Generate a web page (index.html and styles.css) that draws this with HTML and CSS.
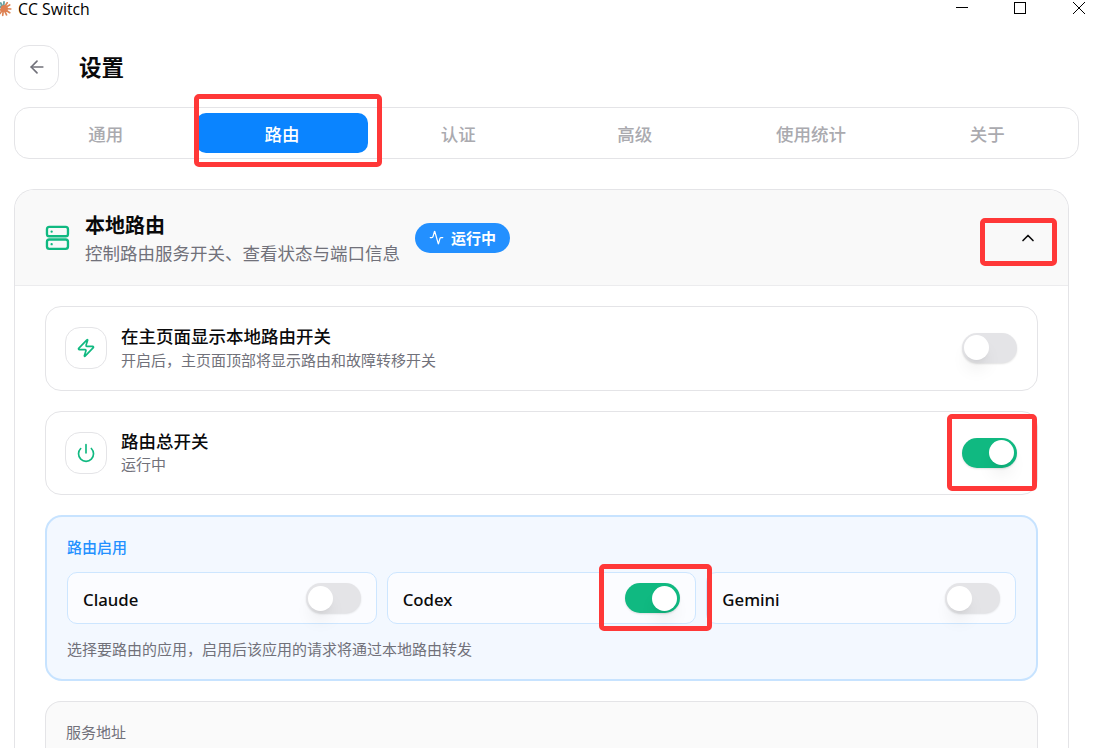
FILE: index.html
```html
<!DOCTYPE html>
<html lang="zh-CN">
<head>
    <meta charset="UTF-8">
    <title>CC Switch</title>
    <link rel="stylesheet" href="styles.css">
</head>
<body>
    <div class="titlebar">
        <svg class="logo" width="12" height="18" viewBox="0 0 12 18" fill="none" stroke-linecap="round">
            <path d="M3.5 8.5 10.8 9M3.5 8.5l6.2-3.6M3.5 8.5l6.2 4.2M3.5 8.5 7.2 2.8M3.5 8.5l3 6.3M3.5 8.5l-.8 6.8M3.5 8.5 0 13.5M3.5 8.5 0 10" stroke="#dc8455" stroke-width="1.7"/>
            <path d="M3.5 7.5 4 2M2.5 7 .7 3M1.5 8 0 6.5" stroke="#6ba3a5" stroke-width="1.9"/>
            <circle cx="4.3" cy="8.7" r="3.6" fill="#df8052"/>
        </svg>
        <span class="app-name">CC Switch</span>
        <svg class="window-buttons" width="130" height="18" viewBox="0 0 130 18" fill="none" stroke="#000" stroke-width="1">
            <path d="M0 7.5h12"/>
            <rect x="58.5" y="2.5" width="11" height="11"/>
            <path d="M117 2l12 12M129 2l-12 12"/>
        </svg>
    </div>

    <div class="page-header">
        <button class="back-button">
            <svg width="20" height="20" viewBox="0 0 24 24" class="icon"><path d="m12 19-7-7 7-7"/><path d="M19 12H5"/></svg>
        </button>
        <h1>设置</h1>
    </div>

    <div class="tabs">
        <div class="tab">通用</div>
        <div class="tab active">路由</div>
        <div class="tab">认证</div>
        <div class="tab">高级</div>
        <div class="tab">使用统计</div>
        <div class="tab">关于</div>
    </div>

    <div class="panel">
        <div class="panel-header">
            <svg width="28" height="28" viewBox="0 0 24 24" class="icon green"><rect width="18" height="8" x="3.4" y="2.5" rx="2"/><rect width="18" height="8" x="3.4" y="13.3" rx="2"/><path d="M7.4 6.5h.01M7.4 17.3h.01"/></svg>
            <div class="panel-title">
                <h2>本地路由</h2>
                <p>控制路由服务开关、查看状态与端口信息</p>
            </div>
            <div class="badge">
                <svg width="15" height="15" viewBox="0 0 24 24" class="icon"><path d="M22 12h-2.48a2 2 0 0 0-1.93 1.46l-2.35 8.36a.25.25 0 0 1-.48 0L9.24 2.18a.25.25 0 0 0-.48 0l-2.35 8.36A2 2 0 0 1 4.49 12H2"/></svg>
                运行中
            </div>
            <svg width="20" height="20" viewBox="0 0 24 24" class="icon chevron"><path d="m18 15-6-6-6 6"/></svg>
        </div>

        <div class="panel-body">
            <div class="row row-home">
                <div class="icon-box">
                    <svg width="20" height="20" viewBox="0 0 24 24" class="icon green"><path d="M4 14a1 1 0 0 1-.78-1.63l9.9-10.2a.5.5 0 0 1 .86.46l-1.92 6.02A1 1 0 0 0 13 10h7a1 1 0 0 1 .78 1.63l-9.9 10.2a.5.5 0 0 1-.86-.46l1.92-6.02A1 1 0 0 0 11 14z"/></svg>
                </div>
                <div class="row-text">
                    <h3>在主页面显示本地路由开关</h3>
                    <p>开启后，主页面顶部将显示路由和故障转移开关</p>
                </div>
                <div class="switch"></div>
            </div>

            <div class="row row-main">
                <div class="icon-box">
                    <svg width="20" height="20" viewBox="0 0 24 24" class="icon green"><path d="M12 2v10"/><path d="M18.4 6.6a9 9 0 1 1-12.77.04"/></svg>
                </div>
                <div class="row-text">
                    <h3>路由总开关</h3>
                    <p>运行中</p>
                </div>
                <div class="switch on"></div>
            </div>

            <div class="routing">
                <h4>路由启用</h4>
                <div class="apps">
                    <div class="app"><span>Claude</span><div class="switch"></div></div>
                    <div class="app"><span>Codex</span><div class="switch on"></div></div>
                    <div class="app"><span>Gemini</span><div class="switch"></div></div>
                </div>
                <p>选择要路由的应用，启用后该应用的请求将通过本地路由转发</p>
            </div>

            <div class="address">服务地址</div>
        </div>
    </div>

    <!-- red highlight frames -->
    <div class="mark mark-tab"></div>
    <div class="mark mark-chevron"></div>
    <div class="mark mark-main"></div>
    <div class="mark mark-codex"></div>
</body>
</html>
```

FILE: styles.css
```css
* {
    box-sizing: border-box;
}

body {
    margin: 0;
    height: 748px;
    overflow: hidden;
    position: relative;
    background: #fff;
    color: #0a0a0b;
    font-family: "Noto Sans", "Noto Sans CJK SC", sans-serif;
}

h1, h2, h3, h4, p {
    margin: 0;
}

.icon {
    display: block;
    flex: none;
    fill: none;
    stroke: currentColor;
    stroke-width: 2;
    stroke-linecap: round;
    stroke-linejoin: round;
}

.green {
    color: #10b981;
}

/* Window title bar */
.titlebar {
    display: flex;
    height: 18px;
    padding-right: 15px;
}

.app-name {
    margin-left: 6px;
    font-family: "Open Sans", sans-serif;
    font-size: 15.8px;
    line-height: 18px;
    color: #000;
}

.window-buttons {
    margin-left: auto;
}

/* Back button and page title */
.page-header {
    display: flex;
    align-items: center;
    gap: 20px;
    margin: 27px 0 0 14px;
    height: 45px;
}

.back-button {
    display: flex;
    align-items: center;
    justify-content: center;
    width: 45px;
    height: 45px;
    padding: 0 0 1px;
    border: 1px solid #e4e4e7;
    border-radius: 15px;
    background: #fff;
    color: #71717a;
}

h1 {
    font-size: 22.5px;
    font-weight: 600;
    line-height: 35px;
}

/* Tabs */
.tabs {
    display: grid;
    grid-template-columns: repeat(6, 1fr);
    gap: 5px;
    width: 1065px;
    height: 52px;
    margin: 17px 0 0 14px;
    padding: 5px;
    border: 1px solid #e4e4e7;
    border-radius: 15px;
}

.tab {
    height: 40px;
    border-radius: 10px;
    color: #aaaaaf;
    font-size: 17.5px;
    font-weight: 500;
    line-height: 42px;
    text-align: center;
}

.tab.active {
    background: #0a84ff;
    color: #fff;
}

/* Local routing panel */
.panel {
    width: 1055px;
    height: 559px;
    margin: 30px 0 0 14px;
    border: 1px solid #e4e4e7;
    border-bottom: 0;
    border-radius: 20px 20px 0 0;
    overflow: hidden;
}

.panel-header {
    display: flex;
    align-items: center;
    height: 96px;
    padding: 0 30px 0 28px;
    background: #f9f9f9;
    border-bottom: 1px solid #ececee;
}

.panel-title {
    margin: 5px 15px 0 14px;
}

.panel-title h2 {
    font-size: 20px;
    font-weight: 600;
    line-height: 26px;
}

.panel-title p {
    font-size: 17.5px;
    line-height: 29px;
    color: #71717a;
}

.badge {
    display: flex;
    align-items: center;
    gap: 7px;
    width: 95px;
    height: 30px;
    padding-left: 14px;
    border-radius: 15px;
    background: #2390ff;
    color: #fff;
    font-size: 15px;
    font-weight: 700;
}

.chevron {
    margin-left: auto;
}

.panel-body {
    display: flex;
    flex-direction: column;
    gap: 20px;
    padding: 20px 30px 0;
}

.row {
    display: flex;
    flex: none;
    align-items: center;
    height: 84px;
    padding: 0 20px 0 19px;
    border: 1px solid #e4e4e7;
    border-radius: 16px;
}

.row-home {
    height: 85px;
    padding-bottom: 1px;
}

.icon-box {
    display: flex;
    align-items: center;
    justify-content: center;
    width: 42px;
    height: 42px;
    border: 1px solid #e4e4e7;
    border-radius: 15px;
}

.row-text {
    margin: 0 0 2px 14px;
}

.row-text h3 {
    font-size: 17.5px;
    font-weight: 500;
    line-height: 24px;
}

.row-text p {
    font-size: 15px;
    line-height: 23px;
    color: #71717a;
}

.row-home .row-text {
    margin-bottom: 0;
}

.row-home p {
    line-height: 25px;
}

/* Toggle switch */
.switch {
    display: flex;
    align-items: center;
    width: 55px;
    height: 30px;
    margin-left: auto;
    padding: 0 2px 1px;
    border-radius: 15px;
    background: #e4e4e7;
    box-shadow: 0 1px 2px rgba(0, 0, 0, 0.12);
}

.switch::before {
    content: "";
    width: 25px;
    height: 25px;
    border-radius: 50%;
    background: #fff;
    box-shadow: 0 12px 18px -4px rgba(0, 0, 0, 0.1), 0 5px 7px -5px rgba(0, 0, 0, 0.1);
}

.switch.on {
    justify-content: flex-end;
    padding-right: 3px;
    background: #10b981;
}

.app .switch {
    padding-bottom: 0;
}

/* Per-app routing */
.routing {
    flex: none;
    height: 166px;
    padding: 20px;
    border: 2px solid #c7e3ff;
    border-radius: 17px;
    background: #f3f8ff;
}

.routing h4 {
    font-size: 15px;
    font-weight: 500;
    line-height: 20px;
    color: #2390ff;
}

.apps {
    display: grid;
    grid-template-columns: repeat(3, 1fr);
    gap: 10px;
    margin-top: 15px;
}

.app {
    display: flex;
    align-items: center;
    height: 52px;
    padding: 0 15px;
    border: 1px solid #cde6ff;
    border-radius: 10px;
    background: #fbfcff;
    font-size: 16.8px;
    font-weight: 500;
}

.app span {
    padding-top: 2px;
}

.routing p {
    margin-top: 15px;
    font-size: 15px;
    line-height: 20px;
    color: #71717a;
}

.address {
    flex: none;
    height: 47px;
    padding: 20px 20px 0;
    border: 1px solid #e4e4e7;
    border-bottom: 0;
    border-radius: 16px 16px 0 0;
    background: #fafafa;
    font-size: 15px;
    line-height: 20px;
    color: #71717a;
}

/* Highlight frames over the page */
.mark {
    position: absolute;
    border: 5px solid #ff3838;
    border-radius: 5px;
}

.mark-tab {
    left: 194px;
    top: 94px;
    width: 188px;
    height: 73px;
}

.mark-chevron {
    left: 980px;
    top: 218px;
    width: 77px;
    height: 48px;
}

.mark-main {
    left: 947px;
    top: 414px;
    width: 90px;
    height: 77px;
}

.mark-codex {
    left: 599px;
    top: 564px;
    width: 113px;
    height: 67px;
}
```
